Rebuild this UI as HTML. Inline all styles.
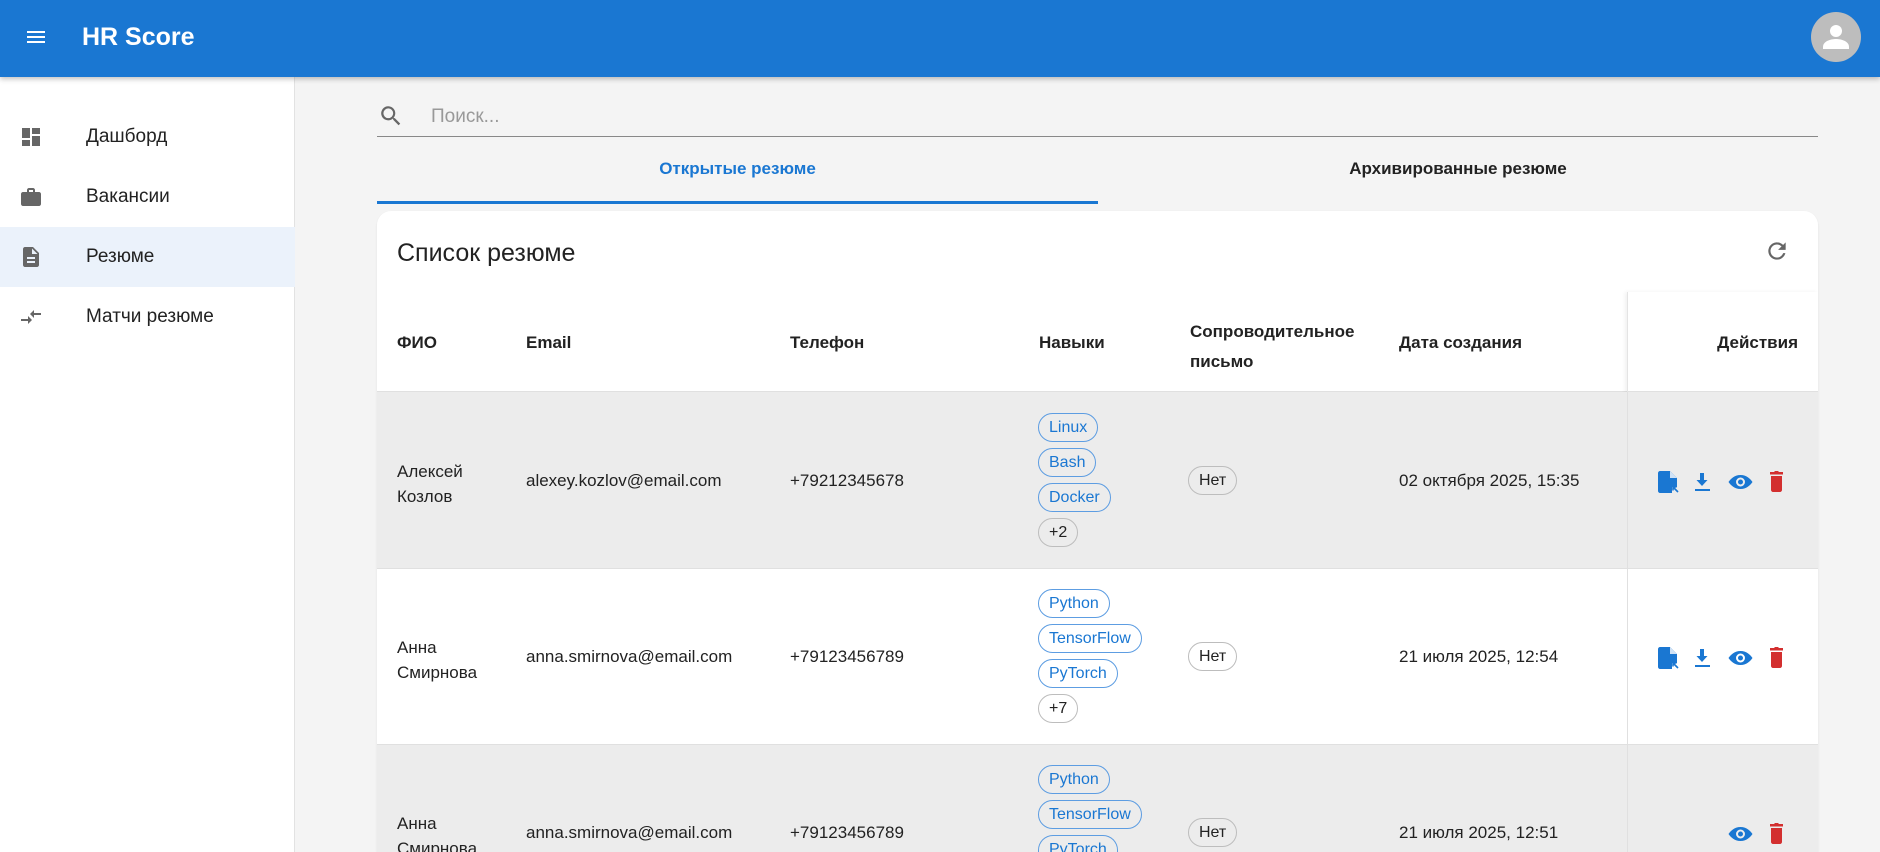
<!DOCTYPE html>
<html><head><meta charset="utf-8"><style>
*{box-sizing:border-box;margin:0;padding:0}
html{width:1880px;height:852px;overflow:hidden}
body{width:1880px;height:852px;overflow:hidden;background:#f4f4f4;font-family:"Liberation Sans",Arial,sans-serif;color:#222;position:relative}
.a{position:absolute}
.hdr{left:0;top:0;width:1880px;height:77px;background:#1a77d2;box-shadow:0 2px 5px rgba(0,0,0,.25);z-index:3}
.side{left:0;top:77px;width:295px;height:775px;background:#fff;border-right:1px solid #e2e2e2}
.nav{position:absolute;left:0;width:295px;height:60px;font-size:19px;color:#222}
.nav span{position:absolute;left:86px;top:19px}
.nav svg{position:absolute;left:19px;top:18px}
.card{left:377px;top:211px;width:1441px;height:641px;background:#fff;border-radius:14px 14px 0 0;overflow:hidden;box-shadow:0 1px 2px rgba(0,0,0,.08)}
.th{position:absolute;font-size:17px;font-weight:bold;color:#222}
.td{position:absolute;font-size:17px;color:#222;line-height:22px}
.chip{position:absolute;height:29px;border:1px solid #5d9de2;border-radius:15px;color:#1a77d2;font-size:16px;line-height:27px;padding:0 10px}
.chip.g{border-color:#bdbdbd;color:#222}
</style></head><body>
<div class="a hdr">
<svg class="a" style="left:24px;top:25px" width="24" height="24" viewBox="0 0 24 24"><path d="M3 6h18v2H3zm0 5h18v2H3zm0 5h18v2H3z" fill="#fff"/></svg>
<div class="a" style="left:82px;top:23px;font-size:25px;font-weight:bold;color:#fff">HR Score</div>
<div class="a" style="left:1811px;top:12px;width:50px;height:50px;border-radius:50%;background:#bdbdbd"><svg width="50" height="50" viewBox="0 0 50 50"><circle cx="25" cy="19" r="6" fill="#fff"/><path d="M12 35c0-6 8-8 13-8s13 2 13 8v2H12z" fill="#fff"/></svg></div>
</div>
<div class="a side">
<div class="nav" style="top:30px"><svg width="24" height="24" viewBox="0 0 24 24"><path d="M3 13h8V3H3zm0 8h8v-6H3zm10 0h8V11h-8zm0-18v6h8V3z" fill="#666"/></svg><span>Дашборд</span></div>
<div class="nav" style="top:90px"><svg width="24" height="24" viewBox="0 0 24 24"><path d="M20 7h-4V5c0-1.1-.9-2-2-2h-4c-1.1 0-2 .9-2 2v2H4c-1.1 0-2 .9-2 2v10c0 1.1.9 2 2 2h16c1.1 0 2-.9 2-2V9c0-1.1-.9-2-2-2zm-6 0h-4V5h4z" fill="#666"/></svg><span>Вакансии</span></div>
<div class="nav" style="top:150px;background:#ebf2fb"><svg width="24" height="24" viewBox="0 0 24 24"><path d="M14 2H6c-1.1 0-2 .9-2 2v16c0 1.1.9 2 2 2h12c1.1 0 2-.9 2-2V8zm2 16H8v-2h8zm0-4H8v-2h8zm-3-5V3.5L18.5 9z" fill="#666"/></svg><span>Резюме</span></div>
<div class="nav" style="top:210px"><svg width="24" height="24" viewBox="0 0 24 24"><path d="M9 14H2v2h7v3l4-4-4-4zm6-1v-3h7V8h-7V5l-4 4z" fill="#666"/></svg><span>Матчи резюме</span></div>
</div>
<svg class="a" style="left:378px;top:103px" width="26" height="26" viewBox="0 0 24 24"><path d="M15.5 14h-.8l-.3-.3A6.5 6.5 0 1 0 9.5 16a6.5 6.5 0 0 0 4.2-1.6l.3.3v.8l5 5 1.5-1.5zm-6 0a4.5 4.5 0 1 1 0-9 4.5 4.5 0 0 1 0 9z" fill="#666"/></svg>
<div class="a" style="left:431px;top:106px;font-size:19px;color:#999">Поиск...</div>
<div class="a" style="left:377px;top:136px;width:1441px;height:1px;background:#888"></div>
<div class="a" style="left:377px;top:159px;width:721px;text-align:center;font-size:17px;font-weight:bold;color:#1a77d2">Открытые резюме</div>
<div class="a" style="left:1098px;top:159px;width:720px;text-align:center;font-size:17px;font-weight:bold;color:#222">Архивированные резюме</div>
<div class="a" style="left:377px;top:201px;width:721px;height:3px;background:#1a77d2"></div>
<div class="a card">
<div class="a" style="left:20px;top:28px;font-size:25px;color:#222">Список резюме</div>
<svg class="a" style="left:1387px;top:27px" width="26" height="26" viewBox="0 0 24 24"><path d="M17.65 6.35A8 8 0 1 0 19.73 14h-2.08A6 6 0 1 1 12 6c1.66 0 3.14.69 4.22 1.78L13 11h7V4z" fill="#666"/></svg>
<div class="a" style="left:0;top:180px;width:1441px;height:1px;background:#e0e0e0"></div>
<div class="a" style="left:1250px;top:81px;width:191px;height:560px;border-left:1px solid #e4e4e4;box-shadow:-2px 0 4px rgba(0,0,0,.06)"></div>
<div class="th" style="left:20px;top:122px">ФИО</div>
<div class="th" style="left:149px;top:122px">Email</div>
<div class="th" style="left:413px;top:122px">Телефон</div>
<div class="th" style="left:662px;top:122px">Навыки</div>
<div class="th" style="left:813px;top:106px;line-height:30px">Сопроводительное<br>письмо</div>
<div class="th" style="left:1022px;top:122px">Дата создания</div>
<div class="th" style="right:20px;top:122px">Действия</div>
<div class="a" style="left:0;top:181px;width:1441px;height:177px;background:#ececec;border-bottom:1px solid #e0e0e0"></div>
<div class="a" style="left:0;top:358px;width:1441px;height:176px;background:#fff;border-bottom:1px solid #e0e0e0"></div>
<div class="a" style="left:0;top:534px;width:1441px;height:107px;background:#ececec"></div>
<div class="a" style="left:1250px;top:181px;width:1px;height:460px;background:#e0e0e0"></div>
<div class="td" style="left:20px;top:248px;line-height:25px">Алексей<br>Козлов</div>
<div class="td" style="left:149px;top:259px">alexey.kozlov@email.com</div>
<div class="td" style="left:413px;top:259px">+79212345678</div>
<div class="chip" style="left:661px;top:202px">Linux</div>
<div class="chip" style="left:661px;top:237px">Bash</div>
<div class="chip" style="left:661px;top:272px">Docker</div>
<div class="chip g" style="left:661px;top:307px">+2</div>
<div class="chip g" style="left:811px;top:255px">Нет</div>
<div class="td" style="left:1022px;top:259px">02 октября 2025, 15:35</div>
<div class="td" style="left:20px;top:424px;line-height:25px">Анна<br>Смирнова</div>
<div class="td" style="left:149px;top:435px">anna.smirnova@email.com</div>
<div class="td" style="left:413px;top:435px">+79123456789</div>
<div class="chip" style="left:661px;top:378px">Python</div>
<div class="chip" style="left:661px;top:413px">TensorFlow</div>
<div class="chip" style="left:661px;top:448px">PyTorch</div>
<div class="chip g" style="left:661px;top:483px">+7</div>
<div class="chip g" style="left:811px;top:431px">Нет</div>
<div class="td" style="left:1022px;top:435px">21 июля 2025, 12:54</div>
<div class="td" style="left:20px;top:600px;line-height:25px;height:41px;overflow:hidden">Анна<br>Смирнова</div>
<div class="td" style="left:149px;top:611px">anna.smirnova@email.com</div>
<div class="td" style="left:413px;top:611px">+79123456789</div>
<div class="chip" style="left:661px;top:554px">Python</div>
<div class="chip" style="left:661px;top:589px">TensorFlow</div>
<div class="chip" style="left:661px;top:624px;height:17px;overflow:hidden;border-bottom:none;border-radius:15px 15px 0 0">PyTorch</div>
<div class="chip g" style="left:811px;top:607px">Нет</div>
<div class="td" style="left:1022px;top:611px">21 июля 2025, 12:51</div>
<svg class="a" style="left:1280px;top:258px" width="140" height="26" viewBox="0 0 140 26">
<path d="M3 2h10l7 7v9h-5v6H3c-1 0-2-1-2-2V4c0-1 1-2 2-2z" fill="#1a77d2"/><path d="M13 2v7h7z" fill="#cfe2f6"/><path d="M16 18l5 5M16 18h3.5M16 18v3.5" stroke="#1a77d2" stroke-width="1.6"/>
<path d="M43 4h4v7h3.5l-5.5 6-5.5-6H43zM38 20h15v2H38z" fill="#1a77d2"/>
<path d="M83.5 6c-6 0-10 4-12 7 2 3 6 7 12 7s10-4 12-7c-2-3-6-7-12-7zm0 11.5a4.5 4.5 0 1 1 0-9 4.5 4.5 0 0 1 0 9zm0-7a2.5 2.5 0 1 0 0 5 2.5 2.5 0 0 0 0-5z" fill="#1a77d2"/>
<path d="M113 3h4l1-1h3l1 1h4v2.5H113zM114 7h11v14c0 1-1 2-2 2h-7c-1 0-2-1-2-2z" fill="#d32f2f"/>
</svg>
<svg class="a" style="left:1280px;top:434px" width="140" height="26" viewBox="0 0 140 26">
<path d="M3 2h10l7 7v9h-5v6H3c-1 0-2-1-2-2V4c0-1 1-2 2-2z" fill="#1a77d2"/><path d="M13 2v7h7z" fill="#cfe2f6"/><path d="M16 18l5 5M16 18h3.5M16 18v3.5" stroke="#1a77d2" stroke-width="1.6"/>
<path d="M43 4h4v7h3.5l-5.5 6-5.5-6H43zM38 20h15v2H38z" fill="#1a77d2"/>
<path d="M83.5 6c-6 0-10 4-12 7 2 3 6 7 12 7s10-4 12-7c-2-3-6-7-12-7zm0 11.5a4.5 4.5 0 1 1 0-9 4.5 4.5 0 0 1 0 9zm0-7a2.5 2.5 0 1 0 0 5 2.5 2.5 0 0 0 0-5z" fill="#1a77d2"/>
<path d="M113 3h4l1-1h3l1 1h4v2.5H113zM114 7h11v14c0 1-1 2-2 2h-7c-1 0-2-1-2-2z" fill="#d32f2f"/>
</svg>
<svg class="a" style="left:1280px;top:610px" width="140" height="26" viewBox="0 0 140 26">
<path d="M83.5 6c-6 0-10 4-12 7 2 3 6 7 12 7s10-4 12-7c-2-3-6-7-12-7zm0 11.5a4.5 4.5 0 1 1 0-9 4.5 4.5 0 0 1 0 9zm0-7a2.5 2.5 0 1 0 0 5 2.5 2.5 0 0 0 0-5z" fill="#1a77d2"/>
<path d="M113 3h4l1-1h3l1 1h4v2.5H113zM114 7h11v14c0 1-1 2-2 2h-7c-1 0-2-1-2-2z" fill="#d32f2f"/>
</svg>
</div>
</body></html>
